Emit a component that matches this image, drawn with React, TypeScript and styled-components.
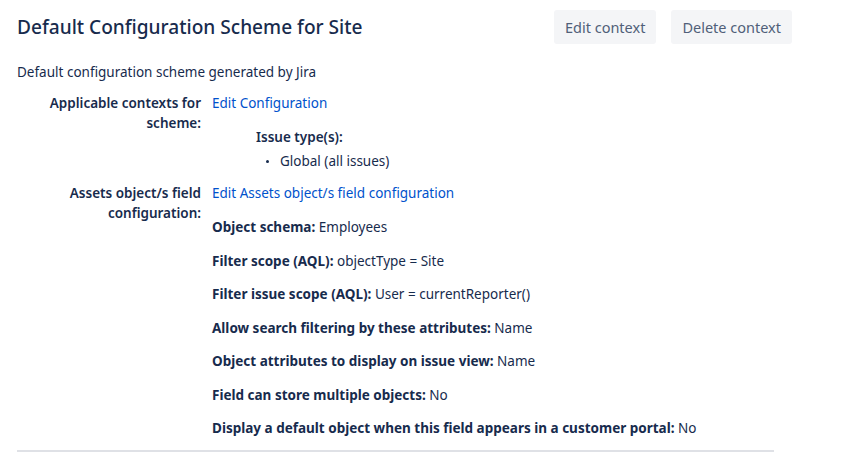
import React from 'react';
import styled, { createGlobalStyle } from 'styled-components';

const GlobalStyle = createGlobalStyle`
	html,
	body {
		margin: 0;
		padding: 0;
		background: #ffffff;
	}

	body {
		font-family: 'Noto Sans', Roboto, 'Liberation Sans', sans-serif;
		font-size: 13.5px;
		line-height: 20px;
		color: #172b4d;
	}
`;

interface AssetSetting {
	label: string;
	value: string;
}

const assetSettings: AssetSetting[] = [
	{ label: 'Object schema:', value: 'Employees' },
	{ label: 'Filter scope (AQL):', value: 'objectType = Site' },
	{ label: 'Filter issue scope (AQL):', value: 'User = currentReporter()' },
	{ label: 'Allow search filtering by these attributes:', value: 'Name' },
	{ label: 'Object attributes to display on issue view:', value: 'Name' },
	{ label: 'Field can store multiple objects:', value: 'No' },
	{ label: 'Display a default object when this field appears in a customer portal:', value: 'No' },
];

const App: React.FunctionComponent = () => {
	return (
		<>
			<GlobalStyle />
			<PageStyles>
				<HeaderStyles>
					<h2>Default Configuration Scheme for Site</h2>
					<ButtonGroup>
						<ContextButton type="button">Edit context</ContextButton>
						<ContextButton type="button">Delete context</ContextButton>
					</ButtonGroup>
				</HeaderStyles>

				<Description>Default configuration scheme generated by Jira</Description>

				<FieldRow>
					<FieldLabel>Applicable contexts for scheme:</FieldLabel>
					<FieldValue>
						<Link href="#">Edit Configuration</Link>
						<IssueTypes>
							<h4>Issue type(s):</h4>
							<ul>
								<li>Global (all issues)</li>
							</ul>
						</IssueTypes>
					</FieldValue>
				</FieldRow>

				<FieldRow>
					<FieldLabel>Assets object/s field configuration:</FieldLabel>
					<FieldValue>
						<Link href="#">Edit Assets object/s field configuration</Link>
						<SettingList>
							{assetSettings.map(
								(setting: AssetSetting): JSX.Element => (
									<Setting key={setting.label}>
										<strong>{setting.label}</strong> {setting.value}
									</Setting>
								),
							)}
						</SettingList>
					</FieldValue>
				</FieldRow>

				<Divider />
			</PageStyles>
		</>
	);
};

const PageStyles = styled.main`
	padding: 10px 51px 0 17px;
	display: flex;
	flex-direction: column;
`;

const HeaderStyles = styled.header`
	display: flex;
	align-items: center;
	justify-content: space-between;
	height: 34px;

	h2 {
		margin: 0;
		font-size: 19.1px;
		line-height: 24px;
		font-weight: 500;
		color: #172b4d;
	}
`;

const ButtonGroup = styled.div`
	display: flex;
	gap: 15px;
`;

const ContextButton = styled.button`
	height: 34px;
	padding: 0 11px;
	border: none;
	border-radius: 3px;
	background: #f4f5f7;
	color: #505f79;
	font-family: inherit;
	font-size: 14.5px;
	cursor: pointer;
`;

const Description = styled.p`
	margin: 18px 0 11px;
`;

const FieldRow = styled.div`
	display: grid;
	grid-template-columns: 184px 1fr;
	column-gap: 11px;
	margin-bottom: 12px;
`;

const FieldLabel = styled.div`
	text-align: right;
	font-weight: 600;
	padding-left: 30px;
`;

const FieldValue = styled.div`
	display: flex;
	flex-direction: column;
	align-items: flex-start;
`;

const Link = styled.a`
	color: #0052cc;
	text-decoration: none;
`;

const IssueTypes = styled.div`
	margin: 14px 0 0 44px;

	h4 {
		margin: 0;
		font-size: 13.5px;
		font-weight: 600;
	}

	ul {
		margin: 4px 0 0;
		padding-left: 24px;
		list-style: none;
	}

	li {
		position: relative;
	}

	li::before {
		content: '';
		position: absolute;
		left: -14px;
		top: 9px;
		width: 3px;
		height: 3px;
		border-radius: 50%;
		background: #172b4d;
	}
`;

const SettingList = styled.div`
	display: flex;
	flex-direction: column;
	gap: 13.5px;
	margin-top: 14px;
`;

const Setting = styled.p`
	margin: 0;

	strong {
		font-weight: 700;
	}
`;

const Divider = styled.hr`
	width: 757px;
	height: 2px;
	margin: 0;
	border: none;
	background: #dfe1e6;
`;

export default App;
